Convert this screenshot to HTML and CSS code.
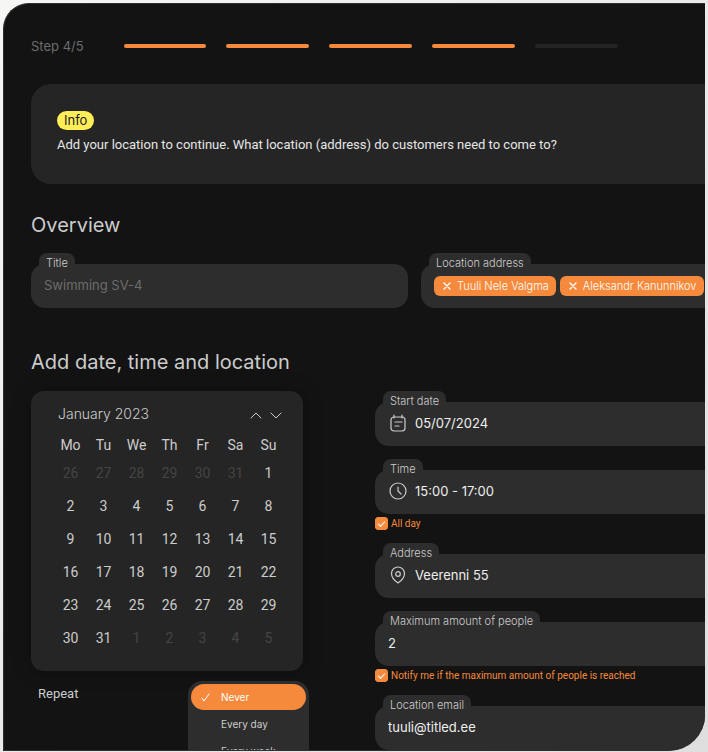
FILE: index.html
```
<!DOCTYPE html>
<html lang="en">

<head>
    <meta charset="UTF-8">
    <title>Add location - Step 4</title>
    <link rel="stylesheet" href="styles.css">
</head>

<body>

    <main class="panel">

        <!-- Steps -->
        <div class="steps">
            <span class="steps-label">Step 4/5</span>
            <div class="steps-bars">
                <span class="bar done"></span>
                <span class="bar done"></span>
                <span class="bar done"></span>
                <span class="bar done"></span>
                <span class="bar"></span>
            </div>
        </div>

        <!-- Info -->
        <section class="info">
            <span class="info-badge">Info</span>
            <p>Add your location to continue. What location (address) do customers need to come to?</p>
        </section>

        <!-- Overview -->
        <h2>Overview</h2>
        <div class="overview">
            <div class="field">
                <label class="tab" for="title">Title</label>
                <div class="box">
                    <input type="text" id="title" placeholder="Swimming SV-4">
                </div>
            </div>
            <div class="field field-open">
                <span class="tab">Location address</span>
                <div class="box tags">
                    <button class="tag" type="button">
                        <svg width="8" height="8" viewBox="0 0 8 8"><path d="M1 1l6 6M7 1L1 7"/></svg>
                        Tuuli Nele Valgma
                    </button>
                    <button class="tag" type="button">
                        <svg width="8" height="8" viewBox="0 0 8 8"><path d="M1 1l6 6M7 1L1 7"/></svg>
                        Aleksandr Kanunnikov
                    </button>
                </div>
            </div>
        </div>

        <!-- Date, time and location -->
        <h2>Add date, time and location</h2>
        <div class="details">
            <div class="left">
                <div class="calendar">
                    <div class="calendar-head">
                        <span class="month">January 2023</span>
                        <button type="button" aria-label="Previous month">
                            <svg width="12" height="8" viewBox="0 0 12 8"><path d="M1 7l5-5 5 5"/></svg>
                        </button>
                        <button type="button" aria-label="Next month">
                            <svg width="12" height="8" viewBox="0 0 12 8"><path d="M1 2l5 5 5-5"/></svg>
                        </button>
                    </div>
                    <table>
                        <thead>
                            <tr><th>Mo</th><th>Tu</th><th>We</th><th>Th</th><th>Fr</th><th>Sa</th><th>Su</th></tr>
                        </thead>
                        <tbody>
                            <tr><td class="out">26</td><td class="out">27</td><td class="out">28</td><td class="out">29</td><td class="out">30</td><td class="out">31</td><td>1</td></tr>
                            <tr><td>2</td><td>3</td><td>4</td><td>5</td><td>6</td><td>7</td><td>8</td></tr>
                            <tr><td>9</td><td>10</td><td>11</td><td>12</td><td>13</td><td>14</td><td>15</td></tr>
                            <tr><td>16</td><td>17</td><td>18</td><td>19</td><td>20</td><td>21</td><td>22</td></tr>
                            <tr><td>23</td><td>24</td><td>25</td><td>26</td><td>27</td><td>28</td><td>29</td></tr>
                            <tr><td>30</td><td>31</td><td class="out">1</td><td class="out">2</td><td class="out">3</td><td class="out">4</td><td class="out">5</td></tr>
                        </tbody>
                    </table>
                </div>

                <!-- Repeat menu -->
                <div class="repeat">
                    <span id="repeatLabel" class="repeat-label">Repeat</span>
                    <div class="menu" role="listbox" aria-labelledby="repeatLabel">
                        <button class="option selected" type="button" role="option" aria-selected="true">
                            <svg width="9" height="9" viewBox="0 0 9 9"><path d="M1 5l2 3 5-7"/></svg>
                            Never
                        </button>
                        <button class="option" type="button" role="option">Every day</button>
                        <button class="option" type="button" role="option">Every week</button>
                    </div>
                </div>
            </div>

            <div class="right">
                <div class="field field-open">
                    <label class="tab" for="date">Start date</label>
                    <div class="box with-icon">
                        <svg width="18" height="18" viewBox="0 0 18 18">
                            <rect x="2" y="3" width="14" height="14" rx="3"/>
                            <path d="M5 1v3M13 1v3M6 8h7M6 12h4"/>
                        </svg>
                        <input type="text" id="date" value="05/07/2024">
                    </div>
                </div>
                <div class="field field-open">
                    <label class="tab" for="time">Time</label>
                    <div class="box with-icon">
                        <svg width="18" height="18" viewBox="0 0 18 18">
                            <circle cx="9" cy="9" r="8"/>
                            <path d="M9 5v4l3 3"/>
                        </svg>
                        <input type="text" id="time" value="15:00 - 17:00">
                    </div>
                    <label class="check"><input type="checkbox" checked>All day</label>
                </div>
                <div class="field field-open">
                    <label class="tab" for="address">Address</label>
                    <div class="box with-icon">
                        <svg width="18" height="18" viewBox="0 0 18 18">
                            <path d="M9 17C6 15 2.500 11.500 2.500 7.500a6.500 6.500 0 0 1 13 0C15.500 11.500 12 15 9 17z"/>
                            <circle cx="9" cy="8" r="2.300"/>
                        </svg>
                        <input type="text" id="address" value="Veerenni 55">
                    </div>
                </div>
                <div class="field field-open">
                    <label class="tab" for="people">Maximum amount of people</label>
                    <div class="box">
                        <input type="text" id="people" value="2">
                    </div>
                    <label class="check"><input type="checkbox" checked>Notify me if the maximum amount of people is reached</label>
                </div>
                <div class="field field-open">
                    <label class="tab" for="email">Location email</label>
                    <div class="box">
                        <input type="email" id="email" value="tuuli@titled.ee">
                    </div>
                </div>
            </div>
        </div>

    </main>

</body>

</html>
```

FILE: styles.css
```
/* Global Styles */
* {
    box-sizing: border-box;
}

body {
    font-family: Inter, sans-serif;
    background: linear-gradient(135deg, #f6f6f5, #dedede);
    color: #cccccc;
    height: 100vh;
    margin: 0;
    padding: 3px 3px 1px;
    overflow: hidden;
}

button,
input {
    font-family: inherit;
    color: inherit;
    border: none;
    background: none;
    margin: 0;
    padding: 0;
}

button {
    cursor: pointer;
}

svg {
    flex: none;
    fill: none;
    stroke: currentColor;
    stroke-linecap: round;
    stroke-linejoin: round;
}

h2 {
    font-size: 20px;
    font-weight: 400;
    line-height: 24px;
    margin: 0;
}

/* Panel */
.panel {
    height: 100%;
    padding: 32px 0 0 27px;
    background: #131313;
    border: 1px solid #303030;
    border-right: none;
    border-radius: 26px 0 36px 0;
    overflow: hidden;
}

/* Steps */
.steps {
    display: flex;
    align-items: center;
    gap: 40px;
    height: 20px;
    margin-bottom: 28px;
}

.steps-label {
    color: #6c6c6c;
    font-size: 13px;
}

.steps-bars {
    display: flex;
    flex: 1;
    gap: 20px;
    max-width: 494px;
}

.bar {
    flex: 1;
    height: 4px;
    border-radius: 2px;
    background: #242424;
}

.bar.done {
    background: #f58a3c;
}

/* Info */
.info {
    height: 100px;
    margin-bottom: 29px;
    padding: 25px 26px;
    background: #252525;
    border-radius: 20px 0 0 20px;
}

.info-badge {
    display: inline-block;
    padding: 0 7px;
    border-radius: 10px;
    background: #ffee58;
    color: #222;
    font-size: 13px;
    line-height: 19px;
}

.info p {
    margin: 6px 0 0;
    color: #e6e6e6;
    font-family: Roboto, sans-serif;
    font-size: 13px;
    line-height: 18px;
}

/* Fields */
.overview {
    display: grid;
    grid-template-columns: 377px 1fr;
    gap: 13px;
    margin: 16px 0 42px;
}

.tab {
    display: block;
    position: relative;
    width: fit-content;
    height: 22px;
    margin: 0 0 -11px 8px;
    padding: 0 7px;
    border-radius: 8px 8px 0 0;
    background: #2d2d2d;
    font-size: 11px;
    font-weight: 300;
    line-height: 21px;
}

.box {
    display: flex;
    align-items: center;
    height: 44px;
    padding: 0 13px 2px;
    border-radius: 14px;
    background: #2d2d2d;
}

.field-open .box {
    border-radius: 14px 0 0 14px;
}

.box input {
    flex: 1;
    min-width: 0;
    font-size: 13px;
    color: #efefef;
}

.box input::placeholder {
    color: #6c6c6c;
    opacity: 1;
}

.with-icon {
    gap: 8px;
    padding-left: 14px;
}

.with-icon svg {
    stroke-width: 1.200;
}

/* Tags */
.tags {
    gap: 4px;
    padding-bottom: 0;
}

.tag {
    display: flex;
    align-items: center;
    gap: 6px;
    height: 20px;
    padding: 0 7px 0 9px;
    border-radius: 6px;
    background: #f58a3c;
    color: #fff;
    font-size: 11px;
    font-weight: 300;
    white-space: nowrap;
}

.tag svg {
    stroke-width: 1.400;
}

/* Details */
.details {
    display: grid;
    grid-template-columns: 278px 1fr;
    gap: 66px;
    margin-top: 17px;
}

/* Calendar */
.calendar {
    width: 272px;
    height: 280px;
    padding: 12px 18px 0 23px;
    border-radius: 13px;
    background: #252525;
    box-shadow: 0 0 20px rgba(0, 0, 0, 0.3);
}

.calendar-head {
    display: flex;
    align-items: center;
    gap: 8px;
    height: 20px;
    padding: 0 3px 0 4px;
}

.month {
    flex: 1;
    font-size: 14px;
    font-weight: 300;
}

.calendar-head button {
    display: flex;
    padding-top: 4px;
}

.calendar table {
    width: 100%;
    margin-top: 10px;
    border-collapse: collapse;
    table-layout: fixed;
    font-family: Roboto, sans-serif;
    font-size: 14px;
    text-align: center;
}

.calendar th {
    height: 23px;
    padding: 0;
    font-weight: 400;
}

.calendar td {
    height: 33px;
    padding: 0;
}

.calendar .out {
    color: #444;
}

/* Repeat */
.repeat {
    display: flex;
    justify-content: space-between;
    padding: 10px 0 0 7px;
}

.repeat-label {
    font-family: Roboto, sans-serif;
    font-size: 13px;
    line-height: 25px;
}

.menu {
    width: 121px;
    padding: 3px;
    border-radius: 14px;
    background: #2d2d2d;
}

.option {
    display: flex;
    align-items: center;
    gap: 11px;
    width: 100%;
    height: 27px;
    padding-left: 30px;
    border-radius: 13px;
    font-size: 10px;
}

.option.selected {
    height: 26px;
    padding-left: 10px;
    background: #f58a3c;
    color: #fff;
}

/* Right column */
.right {
    display: flex;
    flex-direction: column;
    gap: 13px;
}

/* Checkboxes */
.check {
    display: flex;
    align-items: center;
    gap: 3px;
    height: 14px;
    margin-top: 2px;
    color: #f58a3c;
    font-family: Roboto, sans-serif;
    font-size: 10px;
}

.check input {
    appearance: none;
    display: grid;
    place-items: center;
    width: 13px;
    height: 13px;
    border: 1px solid #f58a3c;
    border-radius: 3px;
}

.check input:checked {
    background: #f58a3c;
}

.check input:checked::before {
    content: "";
    width: 6px;
    height: 3px;
    border: solid #fff;
    border-width: 0 0 1px 1px;
    transform: rotate(-45deg);
}
```
